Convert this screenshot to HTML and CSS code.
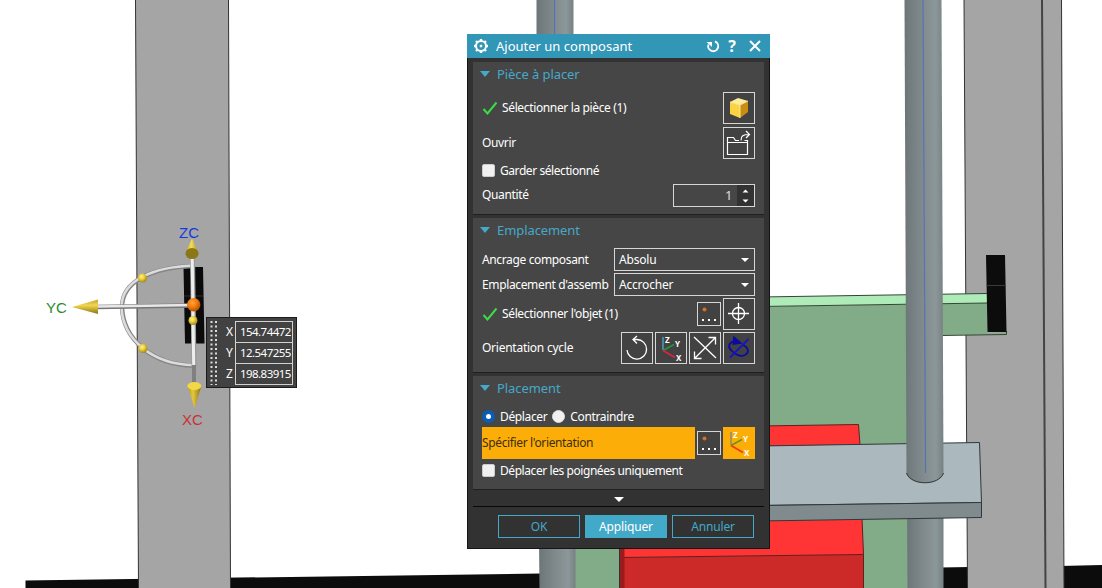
FILE: index.html
```html
<!DOCTYPE html>
<html lang="fr">
<head>
<meta charset="utf-8">
<title>Ajouter un composant</title>
<link rel="stylesheet" href="styles.css">
</head>
<body>
<main class="viewport">
<svg class="scene" width="1102" height="588" viewBox="0 0 1102 588">
  <defs>
    <linearGradient id="tube"><stop offset="0" stop-color="#6b7578"/><stop offset=".1" stop-color="#717b7e"/><stop offset=".5" stop-color="#828c8f"/><stop offset=".8" stop-color="#8c9799"/><stop offset="1" stop-color="#778184"/></linearGradient>
    <linearGradient id="coneY" x1="0" y1="0" x2="0" y2="1"><stop offset="0" stop-color="#c4a631"/><stop offset=".4" stop-color="#f1d64f"/><stop offset="1" stop-color="#8c7414"/></linearGradient>
    <linearGradient id="coneX"><stop offset="0" stop-color="#b29623"/><stop offset=".4" stop-color="#e4c73e"/><stop offset="1" stop-color="#8a7112"/></linearGradient>
    <linearGradient id="coneZ"><stop offset="0" stop-color="#c9ac2c"/><stop offset=".45" stop-color="#f6dc52"/><stop offset="1" stop-color="#a88c1c"/></linearGradient>
    <radialGradient id="ball" cx=".4" cy=".35" r=".65"><stop offset="0" stop-color="#fff28a"/><stop offset=".45" stop-color="#ecd03c"/><stop offset="1" stop-color="#a38818"/></radialGradient>
    <radialGradient id="origin" cx=".4" cy=".35" r=".65"><stop offset="0" stop-color="#ffa64a"/><stop offset=".5" stop-color="#f57d0c"/><stop offset="1" stop-color="#b65200"/></radialGradient>
  </defs>
  <!-- ground -->
  <path d="M25.500 580.500 540 573.500V588H25.500ZM940 567.500 970 567V588H940ZM1060 566 1102 565V588H1060Z" fill="#0c0c0c"/>
  <path d="M575 520H912V588H575Z" fill="#82ab87"/>
  <!-- posts -->
  <path d="M135.500 0H228.500L230.500 588H138.500Z" fill="#a5a5a5"/>
  <path d="M135.500 0 138.500 588M228.500 0 230.500 588" stroke="#333"/>
  <path d="M964 0H1061.500L1064 588H967.500Z" fill="#a5a5a5"/>
  <path d="M964 0 967.500 588M1061.500 0 1064 588" stroke="#333"/>
  <path d="M1042 0 1045.500 588" stroke="#444" stroke-width="2"/>
  <!-- green support -->
  <path d="M760 306.500 987 303V333.500L1006.500 332V334.500L912 335.500V588H760Z" fill="#82ab87"/>
  <path d="M760 297 987 293.500V303L760 306.500Z" fill="#aeebb9"/>
  <path d="M760 297 987 293.500M760 306.500 987 303M942 335.500 1006.500 334.500V331" fill="none" stroke="#344536"/>
  <path d="M986 255H1005L1006.500 332H987.500Z" fill="#0c0c0c"/>
  <path d="M986.500 285.500H1006" stroke="#3a3a3a"/>
  <!-- red block, plate and rods -->
  <path d="M760 426 858.500 424.500 860 445 760 446Z" fill="#ff3535" stroke="#612020"/>
  <path d="M620 522 862 518 863.500 554.500 620 557.500Z" fill="#ff3535"/>
  <path d="M620 557.500 863.500 554.500V588H620Z" fill="#cc2929"/>
  <path d="M620 557.500 863.500 554.500M862 518 863.500 554.500V588" fill="none" stroke="#612020"/>
  <path d="M619.500 540H624.500V588H619.500Z" fill="#9a1c1c"/>
  <path d="M619.500 540V588" stroke="#333"/>
  <path d="M907 500H943.500V588H907.500Z" fill="url(#tube)"/>
  <path d="M760 446 979.500 442.500 981.500 502.500 760 505.500Z" fill="#abb8bd" stroke="#30383a"/>
  <path d="M760 505.500 981.500 502.500V517.500L760 521Z" fill="#808b8d" stroke="#30383a"/>
  <path d="M904.500 0H941.500L943.500 474C939 486 911 486 906.500 474Z" fill="url(#tube)"/>
  <path d="M906.500 473C911 486 939 486 943.500 473" fill="none" stroke="#30383a"/>
  <path d="M923 0 925.500 473" stroke="#5873b4" stroke-width="1.200"/>
  <path d="M536.500 0H573.500V60H536.500Z" fill="url(#tube)"/>
  <path d="M554.500 0V40" stroke="#5873b4" stroke-width="1.200"/>
  <path d="M539 540H575.500V588H539.500Z" fill="url(#tube)"/>
  <!-- selected component and its handles -->
  <path d="M183.500 267H203L204.500 343.500H185Z" fill="#0b0b0b"/>
  <path d="M184 296H203" stroke="#333"/>
  <path d="M193 266C154 267.500 122 280 122 307C123 338 151 365 194 365.500" fill="none" stroke="#858585" stroke-width="4.500"/>
  <path d="M193 265.500C154 267 121.500 280 121.500 307C122.500 338 151 364.500 194 365" fill="none" stroke="#dcdcdc" stroke-width="2.600"/>
  <path d="M97 307 194 305.500" stroke="#777" stroke-width="4.500"/>
  <path d="M97 306.500 194 305" stroke="#e8e8e8" stroke-width="2.600"/>
  <path d="M192.500 256 194 366" stroke="#9a9a9a" stroke-width="5"/>
  <path d="M192.200 256 193.700 366" stroke="#eee" stroke-width="3"/>
  <path d="M194 365V383" stroke="#808080" stroke-width="4"/>
  <path d="M72 307 98 299.500V314Z" fill="url(#coneY)"/>
  <path d="M192 238.500 198.500 253H185.500Z" fill="url(#coneZ)"/>
  <ellipse cx="192" cy="253.500" rx="6.500" ry="5.500" fill="#8c7718"/>
  <path d="M187.500 386H201.300L194.700 408.500Z" fill="url(#coneX)"/>
  <ellipse cx="194.300" cy="386" rx="7" ry="4" fill="#f2d845"/>
  <circle cx="142.500" cy="278" r="4.500" fill="url(#ball)"/>
  <circle cx="143" cy="348.500" r="4.500" fill="url(#ball)"/>
  <circle cx="193" cy="320.500" r="4.500" fill="url(#ball)"/>
  <circle cx="193.700" cy="304.700" r="6.700" fill="url(#origin)"/>
  <g class="axis">
    <text x="179" y="238" fill="#1538e0">ZC</text>
    <text x="46" y="313" fill="#2c8c30">YC</text>
    <text x="182" y="425" fill="#c93232">XC</text>
  </g>
</svg>

<aside class="coords">
  <svg class="grip" width="8" height="64" viewBox="0 0 8 64"><path d="M1.500 0V64M6 0V64" stroke="#ddd" stroke-width="2" stroke-dasharray="2 2.500"/></svg>
  <div class="coord-fields">
    <label>X</label><output>154.74472</output>
    <label>Y</label><output>12.547255</output>
    <label>Z</label><output>198.83915</output>
  </div>
</aside>

<section class="dialog">
  <header class="titlebar">
    <svg width="16" height="16" viewBox="0 0 16 16" fill="none" stroke="#fff"><circle cx="8" cy="8" r="5" stroke-width="2"/><circle cx="8" cy="8" r="1" fill="#fff"/><path d="M8 1V3M8 13V15M1 8H3M13 8H15M3 3 4.500 4.500M11.500 11.500 13 13M13 3 11.500 4.500M4.500 11.500 3 13" stroke-width="2.400"/></svg>
    <h1>Ajouter un composant</h1>
    <svg class="reset" width="14" height="14" viewBox="0 0 14 14"><path d="M9 2.500A5 5 0 1 1 2.500 5.500" fill="none" stroke="#fff" stroke-width="1.900"/><path d="M0.500 3H6V8Z" fill="#fff"/></svg>
    <span class="help">?</span>
    <svg width="12" height="12" viewBox="0 0 12 12"><path d="M1 1 11 11M11 1 1 11" stroke="#fff" stroke-width="2"/></svg>
  </header>

  <div class="panel piece">
    <h2><i></i>Pièce à placer</h2>
    <div class="row tall"><svg class="tick" width="16" height="14" viewBox="0 0 16 14"><path d="M1.500 8 5.500 12.500 14.500 1.500" fill="none" stroke="#3ddb45" stroke-width="2"/></svg><span>Sélectionner la pièce (1)</span>
      <button class="tool"><svg width="30" height="30" viewBox="0 0 30 30"><path d="M6 9 16 12V25L6 21Z" fill="#fbd23f"/><path d="M16 12 24 8V19L16 25Z" fill="#c98d12"/><path d="M6 9 14 5 24 8 16 12Z" fill="#ffeb98"/><path d="M6 9 16 12V25M16 12 24 8" fill="none" stroke="#fff4bb" stroke-width=".8"/></svg></button></div>
    <div class="row tall open"><span>Ouvrir</span>
      <button class="tool"><svg width="30" height="30" viewBox="0 0 30 30" fill="none" stroke="#fff" stroke-width="1.200"><path d="M3.500 14.500H23.500V26.500H3.500ZM3.500 14.500V9.500H9.500L11.500 12.500H15M17 12.500C17 8 19 6.500 25 6.500M22 3 25.500 6.500 22 10M20.500 12.500H23.500V15"/></svg></button></div>
    <div class="row check"><b class="box"></b><span>Garder sélectionné</span></div>
    <div class="row field"><span>Quantité</span><div class="spin"><span>1</span><svg width="17" height="21" viewBox="0 0 17 21" fill="#fff"><path d="M5.500 7.500H11.500L8.500 4.500ZM5.500 14.500H11.500L8.500 17.500Z"/></svg></div></div>
  </div>

  <div class="panel location">
    <h2><i></i>Emplacement</h2>
    <div class="row select-row"><span>Ancrage composant</span><div class="select">Absolu<i></i></div></div>
    <div class="row select-row"><span>Emplacement d'assemb</span><div class="select">Accrocher<i></i></div></div>
    <div class="row tall"><svg class="tick" width="16" height="14" viewBox="0 0 16 14"><path d="M1.500 8 5.500 12.500 14.500 1.500" fill="none" stroke="#3ddb45" stroke-width="2"/></svg><span>Sélectionner l'objet (1)</span>
      <div class="tools"><button class="tool small"><svg width="22" height="22" viewBox="0 0 22 22"><circle cx="6.500" cy="6.500" r="2" fill="#d57122"/><path d="M4 16H6V18H4ZM10 16H12V18H10ZM16 16H18V18H16Z" fill="#fff"/></svg></button>
      <button class="tool"><svg width="30" height="30" viewBox="0 0 30 30" fill="none" stroke="#fff" stroke-width="1.300"><circle cx="14.500" cy="14.500" r="6"/><path d="M14.500 4V25M4 14.500H25"/></svg></button></div></div>
    <div class="row tall cycle"><span>Orientation cycle</span>
      <div class="tools"><button class="tool"><svg width="30" height="30" viewBox="0 0 30 30" fill="none" stroke="#fff" stroke-width="1.300"><path d="M11 6.500H15A9.800 9.800 0 1 1 5 17M15 3 11 6.500 15 10.500"/></svg></button>
      <button class="tool"><svg class="triad" width="30" height="30" viewBox="0 0 30 30" fill="none"><path d="M7 4V17" stroke="#52a9d0" stroke-width="1.300"/><path d="M7 17.500 18 11.500" stroke="#229a38" stroke-width="1.500"/><path d="M7 17.500 19 24.500" stroke="#e02142" stroke-width="1.600"/><text x="9" y="10">Z</text><text x="19" y="14">Y</text><text x="20" y="28">X</text></svg></button>
      <button class="tool"><svg width="30" height="30" viewBox="0 0 30 30" fill="none" stroke="#fff" stroke-width="1.300"><path d="M4 4 26 25M4.500 25.500 25.500 4.500M18.500 4.500H25.500V11.500M4.500 18.500V25.500H11.500"/></svg></button>
      <button class="tool"><svg width="30" height="30" viewBox="0 0 30 30" fill="none" stroke="#0b0ba0" stroke-width="1.800"><path d="M12 8C4 9 4 14 7 17C11 22 17 24 21 22C26 19 24 14 19 12"/><path d="M6 24.500 24.500 6" stroke="#1616c0"/><path d="M10 4.500 16.500 10 9.500 11Z" fill="#0b0ba0"/></svg></button></div></div>
  </div>

  <div class="panel placement">
    <h2><i></i>Placement</h2>
    <div class="row radios"><b class="radio on"></b><span class="first">Déplacer</span><b class="radio"></b><span>Contraindre</span></div>
    <div class="row tall orient"><div class="active"><span>Spécifier l'orientation</span></div>
      <button class="tool small"><svg width="22" height="22" viewBox="0 0 22 22"><circle cx="6.500" cy="6.500" r="2" fill="#d57122"/><path d="M4 16H6V18H4ZM10 16H12V18H10ZM16 16H18V18H16Z" fill="#fff"/></svg></button>
      <button class="tool hot"><svg class="triad" width="30" height="30" viewBox="0 0 30 30" fill="none"><path d="M7 4V17" stroke="#788b68" stroke-width="1.300"/><path d="M7 17.500 18 11.500" stroke="#659622" stroke-width="1.600"/><path d="M7 17.500 19 24.500" stroke="#f03a12" stroke-width="1.700"/><text x="9" y="10">Z</text><text x="19" y="14">Y</text><text x="20" y="28">X</text></svg></button></div>
    <div class="row check handles"><b class="box"></b><span>Déplacer les poignées uniquement</span></div>
  </div>

  <div class="more"><i></i></div>
  <footer class="actions"><button>OK</button><button class="primary">Appliquer</button><button>Annuler</button></footer>
</section>
</main>
</body>
</html>
```

FILE: styles.css
```css
* { box-sizing: border-box; }
body { margin: 0; background: #fff; font: 12px/16px "Noto Sans", "Open Sans", sans-serif; color: #fff; overflow: hidden; }
button { font: inherit; padding: 0; margin: 0; }
svg { display: block; flex: none; }
.viewport { position: relative; width: 1102px; height: 588px; overflow: hidden; }
.axis { font: 15px "Liberation Sans", Arial, sans-serif; }

.coords { position: absolute; left: 206px; top: 317px; width: 91px; height: 71px; display: flex; background: #424242; border: 1px solid #1c1c1c; padding: 3px 3px 0 2px; }
.grip { margin: 0 8px 0 1px; }
.coord-fields { display: grid; grid-template-columns: 9px 58px; grid-template-rows: repeat(3, 21px); }
.coord-fields label { line-height: 21px; }
.coord-fields output { border: 1px solid #d2d2d2; height: 22px; line-height: 20px; padding-left: 4px; white-space: nowrap; font-size: 11.500px; letter-spacing: -0.550px; }

.dialog { position: absolute; left: 467px; top: 34px; width: 303px; height: 515px; background: #323232; border: 1px solid #151515; border-top: 0; display: flex; flex-direction: column; }
.titlebar { height: 24px; margin: 0 -1px; background: #3296b7; display: flex; align-items: center; padding: 0 9px 0 6px; }
.titlebar h1 { margin: 0 0 0 7px; font: inherit; font-size: 13px; flex: 1; }
.reset { margin-right: 6px; }
.help { font-size: 16px; font-weight: 700; width: 12px; margin-right: 11px; text-align: center; }

.panel { margin: 0 5px; padding: 0 9px; background: #464646; border-bottom: 1px solid #202020; white-space: nowrap; }
.panel h2 { margin: 0 0 4px; height: 26px; padding-bottom: 2px; display: flex; align-items: center; gap: 7px; font: 13px/18px "Noto Sans", sans-serif; letter-spacing: -0.080px; color: #45a9c9; }
.panel h2 i { margin-left: -2px; border: 5.500px solid transparent; border-top: 6px solid #45a9c9; border-bottom: 0; }
.piece { height: 153px; margin-top: 4px; }
.location { height: 155px; margin-top: 3px; }
.placement { height: 114px; margin-top: 3px; }
.panel.location h2 { height: 25px; margin-bottom: 5px; }
.panel.placement h2 { height: 25px; margin-bottom: 5px; }
.row { display: flex; align-items: center; letter-spacing: -0.360px; }
.tall { height: 32px; justify-content: space-between; }
.tick + span { flex: 1; margin-left: 4px; }
.open { margin-top: 3px; }
.tool { width: 32px; height: 32px; background: #424242; border: 1px solid #d6d6d6; flex: none; overflow: hidden; }
.small { width: 24px; height: 24px; }
.tools { display: flex; align-items: center; gap: 2px; }
.check { height: 23px; letter-spacing: -0.430px; }
.box { width: 13px; height: 13px; background: #f1f1f1; border: 1px solid #ccc; border-radius: 2px; margin-right: 5px; }
.field { height: 24px; justify-content: space-between; margin-top: 1px; }
.spin { width: 82px; height: 23px; border: 1px solid #d6d6d6; display: flex; justify-content: flex-end; align-items: center; }
.spin span { margin-right: 5px; font-size: 13px; color: #ddd; }
.spin svg { background: #323232; }
.select-row { height: 25px; justify-content: space-between; align-items: flex-start; line-height: 23px; }
.select { width: 141px; height: 23px; border: 1px solid #d6d6d6; padding: 0 5px 0 4px; display: flex; align-items: center; justify-content: space-between; line-height: 20px; letter-spacing: -0.200px; }
.select i { border: 4px solid transparent; border-top-color: #fff; border-bottom: 0; }
.cycle { margin-top: 2px; letter-spacing: -0.250px; }
.triad text { font: 700 8px "Noto Sans", sans-serif; fill: #fff; }
.radios { height: 21px; }
.radio { width: 13px; height: 13px; border-radius: 50%; background: #f1f1f1; border: 1px solid #ddd; margin-right: 5px; }
.radio.on { border: 4px solid #0a5db5; background: #fff; }
.first { margin-right: 5px; }
.orient { justify-content: flex-start; gap: 2px; }
.active { width: 213px; height: 32px; background: #fcad08; color: #3d2e0a; display: flex; align-items: center; }
.hot { background: #fcad08; border-color: #fcad08; }
.more { height: 17px; margin: 0 5px; border-bottom: 1px solid #080808; display: flex; justify-content: center; align-items: center; }
.more i { border: 5px solid transparent; border-top-color: #fff; border-bottom: 0; margin-top: 3px; }
.actions { display: flex; justify-content: flex-end; gap: 5px; padding: 8px 15px 0 0; }
.actions button { width: 82px; height: 23px; border: 1px solid #42a9c8; background: transparent; color: #42a9c8; letter-spacing: -0.150px; }
.actions .primary { color: #fff; background: #42a9c8; }
```
